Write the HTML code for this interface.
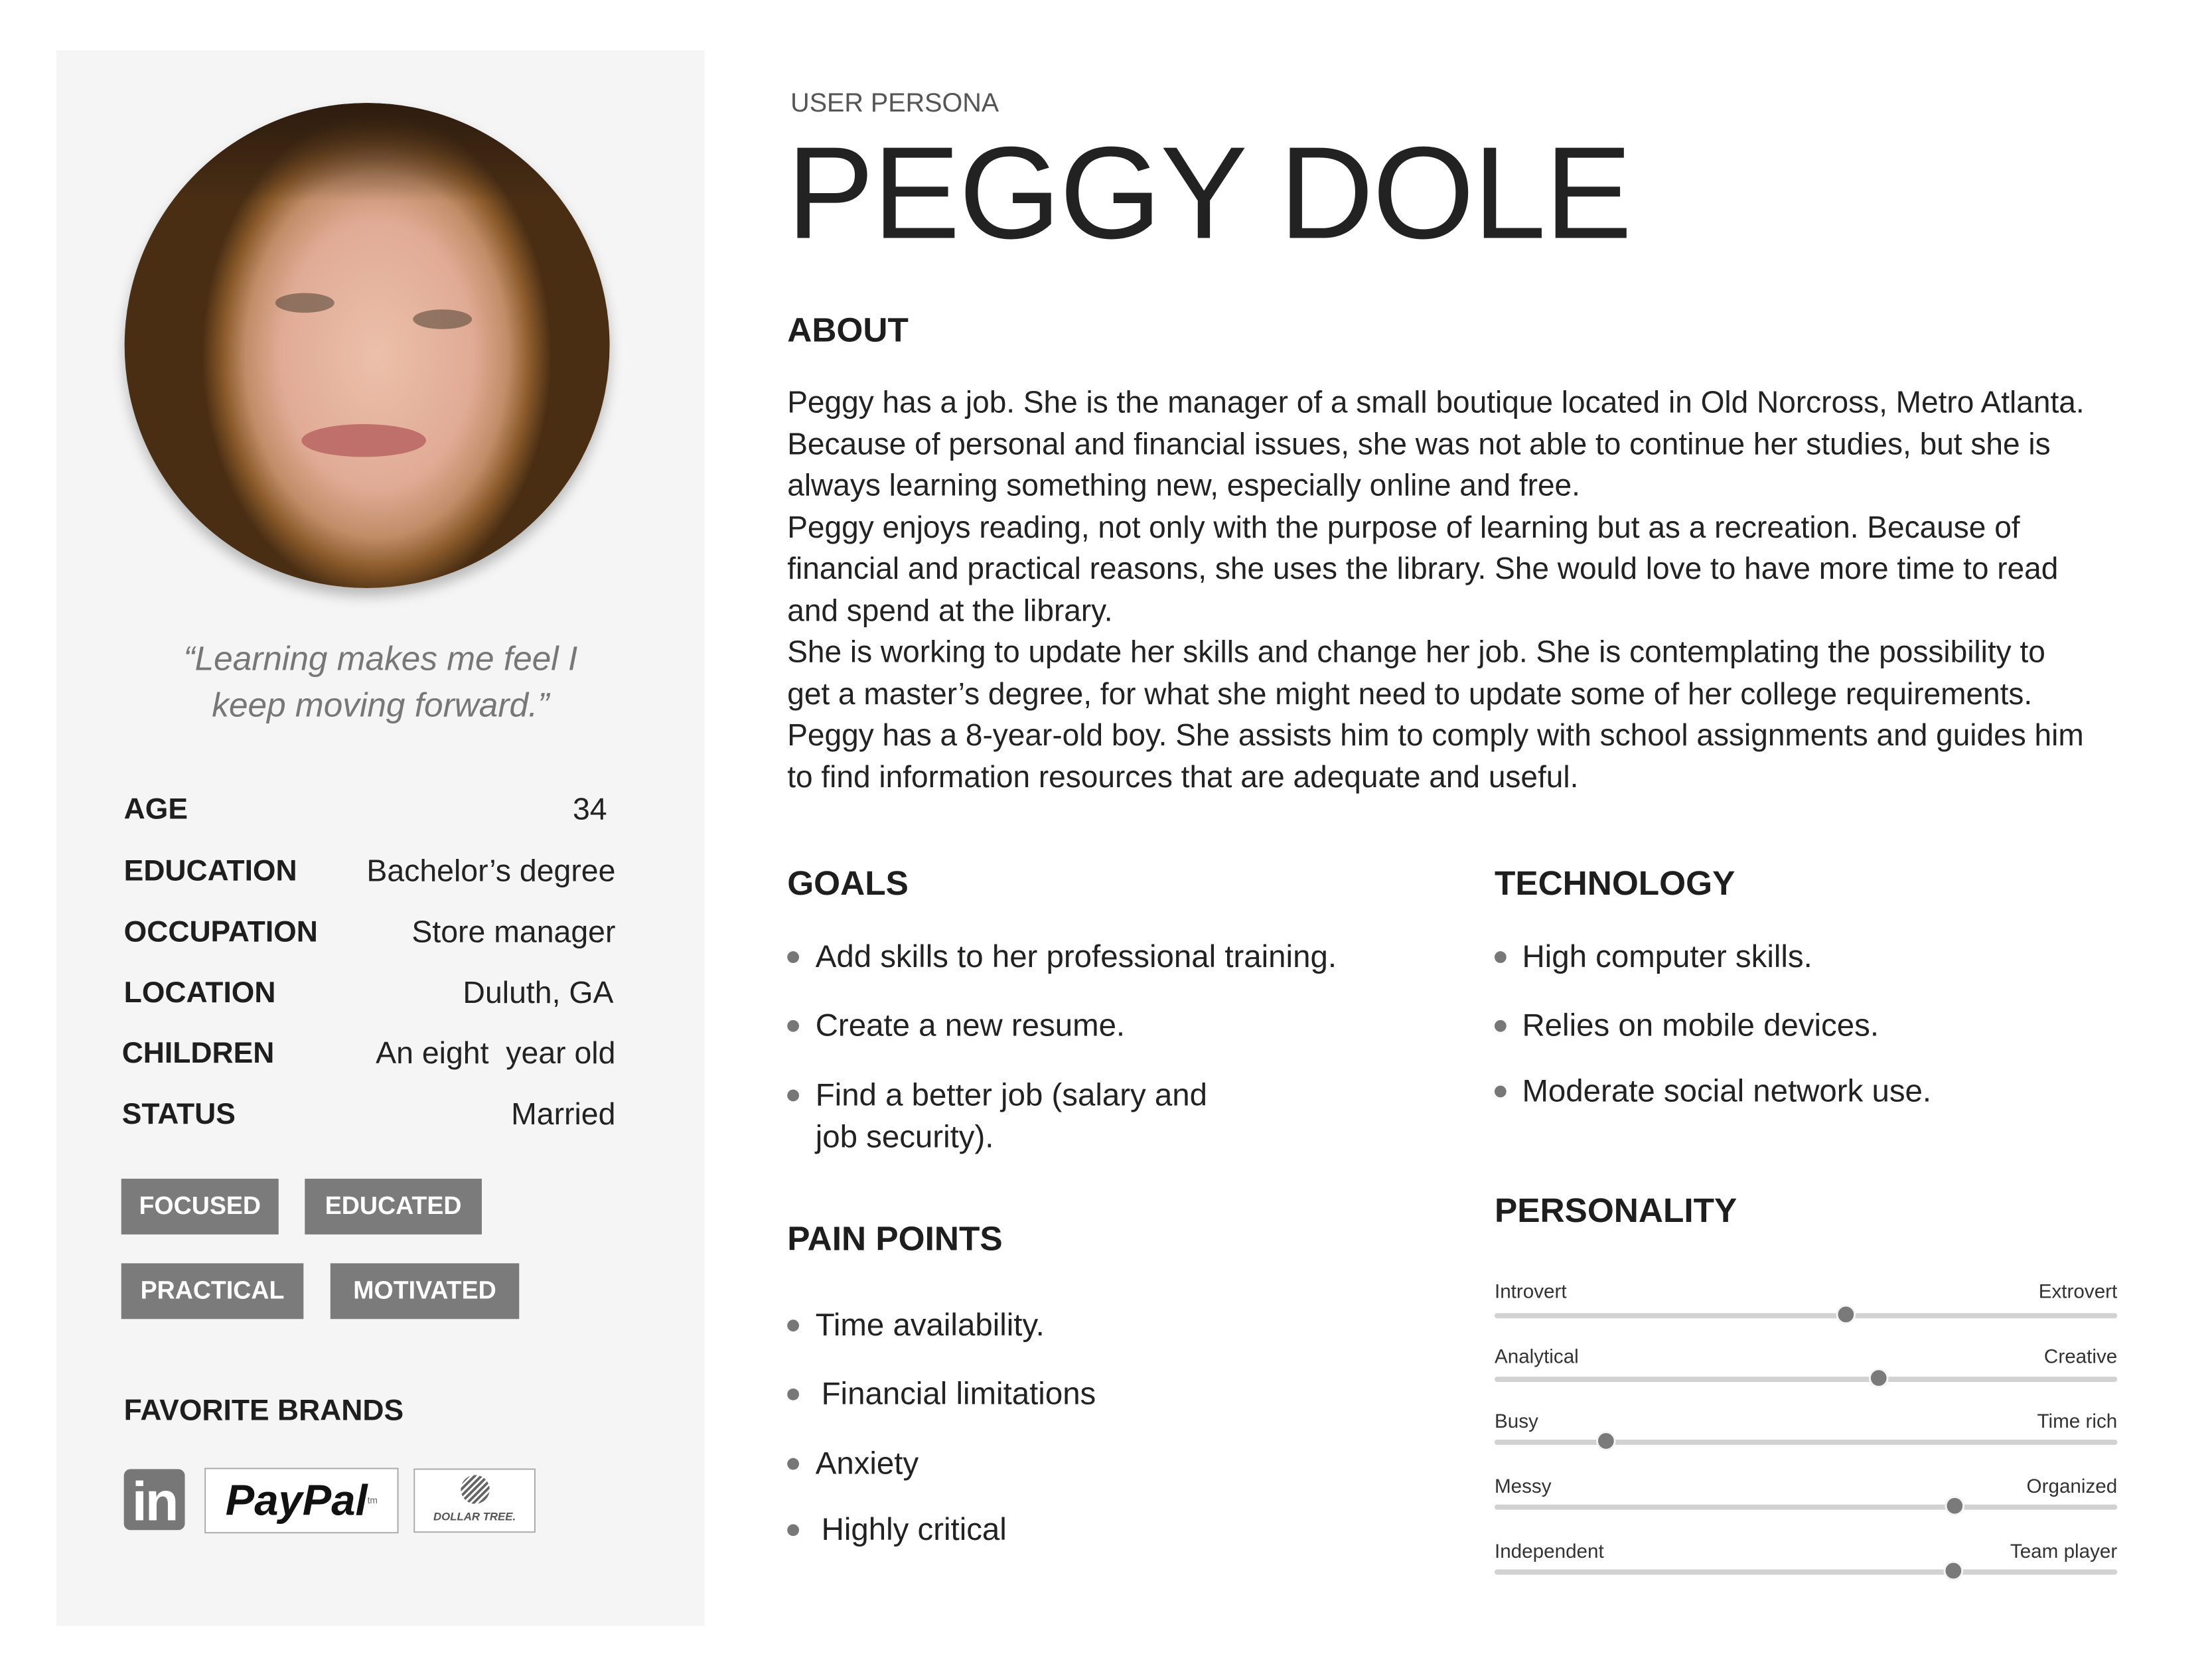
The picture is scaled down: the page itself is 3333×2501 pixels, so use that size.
<!DOCTYPE html>
<html><head><meta charset="utf-8"><style>
*{margin:0;padding:0;box-sizing:border-box}
body{width:3333px;height:2500px;background:#fff;position:relative;overflow:hidden;font-family:"Liberation Sans",sans-serif;color:#222}
#w{position:absolute;left:0;top:0;width:3375px;height:2532px;transform:scale(0.9877);transform-origin:0 0}
.a{position:absolute;white-space:nowrap}
.panel{position:absolute;left:86px;top:77px;width:989px;height:2403px;background:#f5f5f5}
.lbl{font-weight:bold;font-size:45px;line-height:60px;color:#1e1e1e}
.val{font-size:47px;line-height:60px;color:#222;text-align:right;right:2436px}
.tag{position:absolute;background:#7b7b7b;color:#fff;font-weight:bold;font-size:38px;height:85px;line-height:85px;text-align:center}
.h{font-weight:bold;font-size:52px;line-height:70px;color:#1e1e1e}
.p{font-size:46.6px;line-height:63.5px;color:#222}
.li{font-size:48px;line-height:64px;color:#222}
.dot{position:absolute;width:18px;height:18px;border-radius:50%;background:#777}
.sl{font-family:"Liberation Sans Narrow","Liberation Sans",sans-serif;font-size:30px;line-height:40px;color:#333}
.tr{position:absolute;left:2280px;width:950px;height:8px;border-radius:4px;background:#d2d2d2}
.kn{position:absolute;width:30px;height:30px;border-radius:50%;background:#7a7a7a;border:3px solid #f5f5f5}
</style></head><body><div id="w">
<div class="panel"></div>
<div style="position:absolute;left:190px;top:157px;width:740px;height:740px;border-radius:50%;overflow:hidden;box-shadow:0 12px 20px rgba(0,0,0,.25);background:radial-gradient(ellipse 36% 50% at 52% 52%,#ecc0ab 0%,#e0ab95 55%,#c08d68 75%,#8a5a2a 88%,#4a2e14 100%)">
<div style="position:absolute;left:0;top:0;width:740px;height:150px;background:linear-gradient(#2d1c0f,rgba(60,35,15,0))"></div>
<div style="position:absolute;left:230px;top:290px;width:90px;height:30px;border-radius:50%;background:#5a4a3a;opacity:.6"></div>
<div style="position:absolute;left:440px;top:315px;width:90px;height:30px;border-radius:50%;background:#5a4a3a;opacity:.6"></div>
<div style="position:absolute;left:270px;top:490px;width:190px;height:50px;border-radius:50%;background:#c0706a"></div>
</div>
<div class="a" style="left:86px;width:989px;text-align:center;top:970px;font-style:italic;font-size:52px;line-height:71px;color:#777;white-space:normal">“Learning makes me feel I<br>keep moving forward.”</div>
<div class="a lbl" style="left:189px;top:1204px">AGE</div><div class="a val" style="top:1204px;right:2449px">34</div>
<div class="a lbl" style="left:189px;top:1298px">EDUCATION</div><div class="a val" style="top:1298px">Bachelor’s degree</div>
<div class="a lbl" style="left:189px;top:1391px">OCCUPATION</div><div class="a val" style="top:1391px">Store manager</div>
<div class="a lbl" style="left:189px;top:1484px">LOCATION</div><div class="a val" style="top:1484px;right:2439px">Duluth, GA</div>
<div class="a lbl" style="left:186px;top:1576px">CHILDREN</div><div class="a val" style="top:1576px">An eight&nbsp; year old</div>
<div class="a lbl" style="left:186px;top:1669px">STATUS</div><div class="a val" style="top:1669px">Married</div>
<div class="tag" style="left:185px;top:1798px;width:240px">FOCUSED</div>
<div class="tag" style="left:465px;top:1798px;width:270px">EDUCATED</div>
<div class="tag" style="left:185px;top:1927px;width:278px">PRACTICAL</div>
<div class="tag" style="left:504px;top:1927px;width:288px">MOTIVATED</div>
<div class="a lbl" style="left:189px;top:2121px">FAVORITE BRANDS</div>
<div style="position:absolute;left:189px;top:2241px;width:93px;height:93px;border-radius:10px;background:#777;color:#fff;font-weight:bold;font-size:84px;line-height:98px;text-align:center;letter-spacing:-3px">in</div>
<div style="position:absolute;left:312px;top:2239px;width:296px;height:100px;border:2px solid #aaa;background:#fff;font-weight:bold;font-style:italic;font-size:66px;line-height:94px;text-align:center;color:#111">PayPal<span style="font-size:14px;vertical-align:top;font-style:normal;font-weight:normal;color:#666">tm</span></div>
<div style="position:absolute;left:631px;top:2240px;width:186px;height:98px;border:2px solid #aaa;background:#fff">
<div style="position:absolute;left:70px;top:8px;width:44px;height:44px;border-radius:50%;background:repeating-linear-gradient(135deg,#666 0 4px,#fff 4px 7px)"></div>
<div style="position:absolute;left:0;width:182px;top:62px;text-align:center;font-weight:bold;font-style:italic;font-size:17px;color:#555">DOLLAR TREE.</div></div>

<div class="a" style="left:1206px;top:135px;font-size:40px;line-height:44px;color:#555">USER PERSONA</div>
<div class="a" style="left:1200px;top:185px;font-size:200px;line-height:220px;color:#222;letter-spacing:-2px">PEGGY DOLE</div>
<div class="a h" style="left:1201px;top:469px">ABOUT</div>
<div class="a p" style="left:1201px;top:582px;white-space:normal;width:2150px">Peggy has a job. She is the manager of a small boutique located in Old Norcross, Metro Atlanta.<br>Because of personal and financial issues, she was not able to continue her studies, but she is<br>always learning something new, especially online and free.<br>Peggy enjoys reading, not only with the purpose of learning but as a recreation. Because of<br>financial and practical reasons, she uses the library. She would love to have more time to read<br>and spend at the library.<br>She is working to update her skills and change her job. She is contemplating the possibility to<br>get a master’s degree, for what she might need to update some of her college requirements.<br>Peggy has a 8-year-old boy. She assists him to comply with school assignments and guides him<br>to find information resources that are adequate and useful.</div>

<div class="a h" style="left:1201px;top:1313px">GOALS</div>
<div class="dot" style="left:1201px;top:1451px"></div><div class="a li" style="left:1244px;top:1428px">Add skills to her professional training.</div>
<div class="dot" style="left:1201px;top:1556px"></div><div class="a li" style="left:1244px;top:1533px">Create a new resume.</div>
<div class="dot" style="left:1201px;top:1662px"></div><div class="a li" style="left:1244px;top:1639px;white-space:normal;line-height:64px">Find a better job (salary and<br>job security).</div>
<div class="a h" style="left:1201px;top:1855px">PAIN POINTS</div>
<div class="dot" style="left:1201px;top:2013px"></div><div class="a li" style="left:1244px;top:1990px">Time availability.</div>
<div class="dot" style="left:1201px;top:2118px"></div><div class="a li" style="left:1253px;top:2095px">Financial limitations</div>
<div class="dot" style="left:1201px;top:2224px"></div><div class="a li" style="left:1244px;top:2201px">Anxiety</div>
<div class="dot" style="left:1201px;top:2325px"></div><div class="a li" style="left:1253px;top:2302px">Highly critical</div>

<div class="a h" style="left:2280px;top:1313px">TECHNOLOGY</div>
<div class="dot" style="left:2280px;top:1451px"></div><div class="a li" style="left:2322px;top:1428px">High computer skills.</div>
<div class="dot" style="left:2280px;top:1556px"></div><div class="a li" style="left:2322px;top:1533px">Relies on mobile devices.</div>
<div class="dot" style="left:2280px;top:1656px"></div><div class="a li" style="left:2322px;top:1633px">Moderate social network use.</div>
<div class="a h" style="left:2280px;top:1812px">PERSONALITY</div>

<div class="a sl" style="left:2280px;top:1951px">Introvert</div><div class="a sl" style="right:145px;top:1951px">Extrovert</div>
<div class="tr" style="top:2003px"></div><div class="kn" style="left:2801px;top:1990px"></div>
<div class="a sl" style="left:2280px;top:2050px">Analytical</div><div class="a sl" style="right:145px;top:2050px">Creative</div>
<div class="tr" style="top:2100px"></div><div class="kn" style="left:2851px;top:2087px"></div>
<div class="a sl" style="left:2280px;top:2149px">Busy</div><div class="a sl" style="right:145px;top:2149px">Time rich</div>
<div class="tr" style="top:2196px"></div><div class="kn" style="left:2435px;top:2183px"></div>
<div class="a sl" style="left:2280px;top:2248px">Messy</div><div class="a sl" style="right:145px;top:2248px">Organized</div>
<div class="tr" style="top:2295px"></div><div class="kn" style="left:2967px;top:2282px"></div>
<div class="a sl" style="left:2280px;top:2347px">Independent</div><div class="a sl" style="right:145px;top:2347px">Team player</div>
<div class="tr" style="top:2394px"></div><div class="kn" style="left:2965px;top:2381px"></div>
</div></body></html>
